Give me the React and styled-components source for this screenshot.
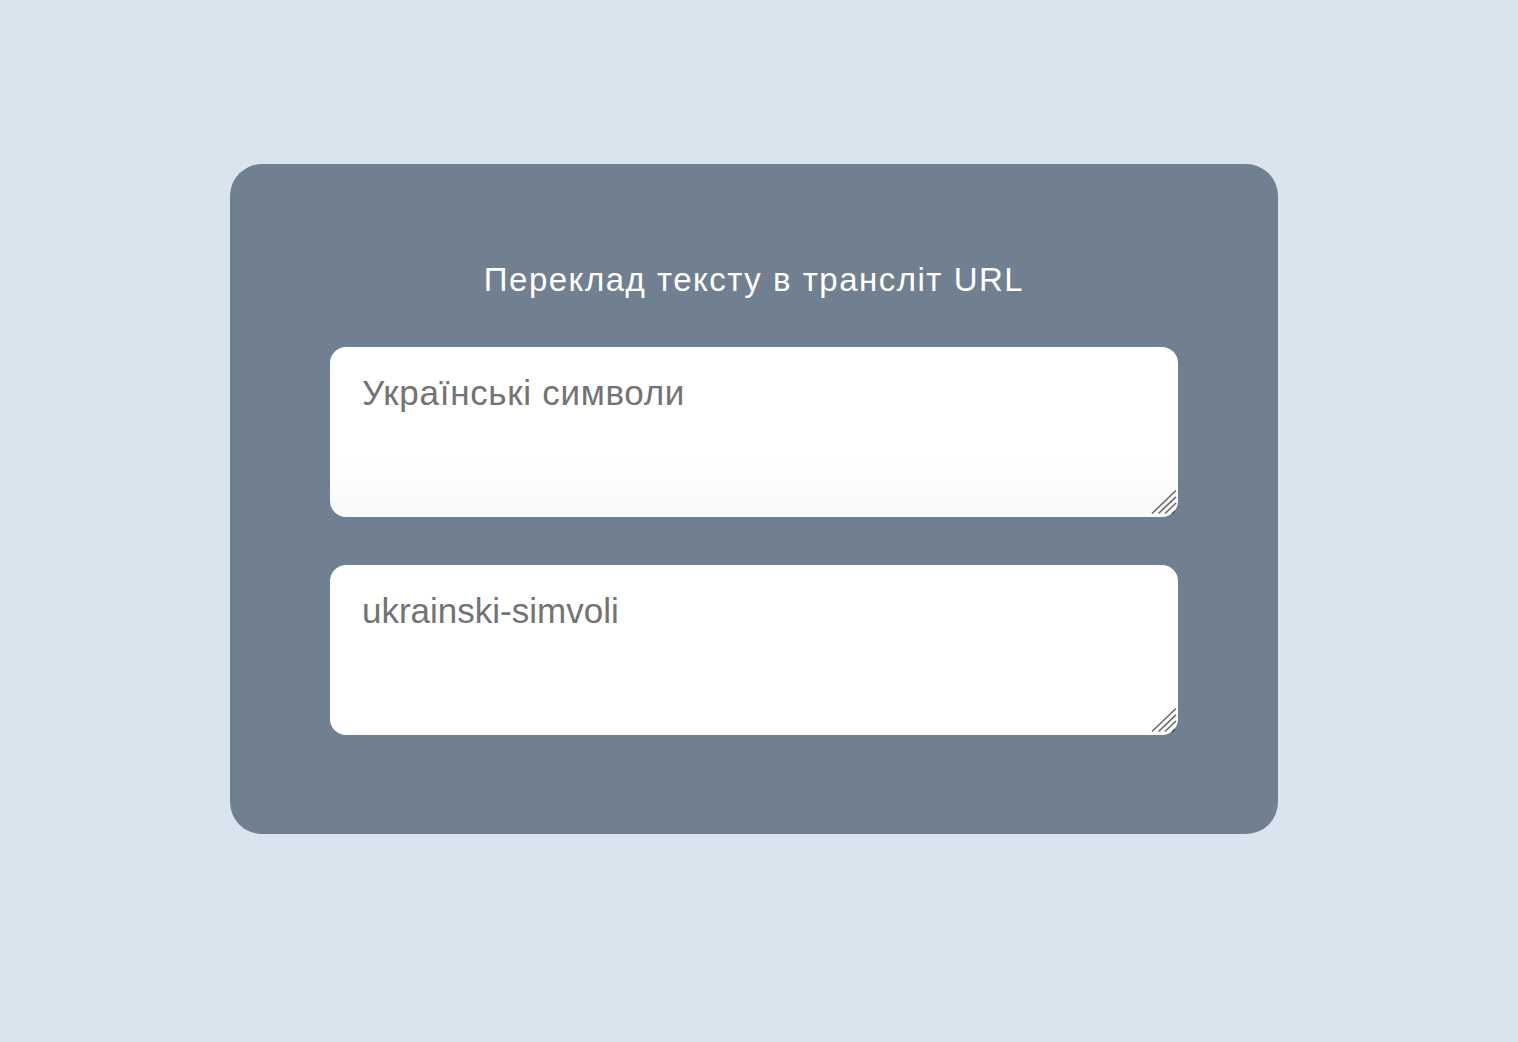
import React, { useState } from 'react'
import styled, { createGlobalStyle } from 'styled-components'

const GlobalStyle = createGlobalStyle`
    html, body {
        margin: 0;
        background: #d9e4ee;
        font-family: "Liberation Sans", Arial, sans-serif;
    }
`

const Page = styled.div`
    min-height: 1042px;
    box-sizing: border-box;
    padding: 164px 240px 0 230px;
`

const Card = styled.div`
    width: 1048px;
    height: 670px;
    box-sizing: border-box;
    padding: 97px 100px 100px;
    background: #718090;
    border-radius: 32px;
    box-shadow: 0 0 40px rgba(255, 255, 255, 0.08);
    display: flex;
    flex-direction: column;
`

const Title = styled.h1`
    margin: 0 0 48px;
    text-align: center;
    color: #ffffff;
    font-size: 33px;
    font-weight: 400;
    line-height: 38px;
    letter-spacing: 1.5px;
`

const Fields = styled.div`
    display: flex;
    flex-direction: column;
    gap: 48px;
`

const FieldWrap = styled.div`
    position: relative;
    height: 170px;
`

const Field = styled.textarea`
    display: block;
    width: 100%;
    height: 100%;
    box-sizing: border-box;
    padding: 26px 32px;
    border: none;
    border-radius: 16px;
    outline: none;
    background: ${(p) => (p.$shaded ? 'linear-gradient(#ffffff 65%, #f8f9f9)' : '#ffffff')};
    color: #737373;
    font-family: "Liberation Sans", Arial, sans-serif;
    font-size: 35px;
    line-height: 40px;
    resize: none;
    &::placeholder {
        color: #737373;
        letter-spacing: 0.7px;
    }
`

const Grip = styled.svg`
    position: absolute;
    right: 0;
    bottom: 0;
    width: 28px;
    height: 28px;
    pointer-events: none;
`

const ResizeGrip = () => (
    <Grip viewBox="0 0 28 28">
        <g stroke="#6b6b6b" strokeWidth="1.6" strokeLinecap="butt">
            <line x1="2" y1="24.5" x2="26" y2="1.5" />
            <line x1="8.5" y1="24.5" x2="26" y2="7.8" />
            <line x1="15" y1="24.5" x2="26" y2="14" />
        </g>
        <line x1="22" y1="25" x2="25" y2="22" stroke="#3e4a58" strokeWidth="1.6" />
    </Grip>
)

const toUrl = (s) => {
    const map = {
        а: 'a', б: 'b', в: 'v', г: 'h', ґ: 'g', д: 'd', е: 'e', є: 'ie', ж: 'zh', з: 'z',
        и: 'y', і: 'i', ї: 'i', й: 'i', к: 'k', л: 'l', м: 'm', н: 'n', о: 'o', п: 'p',
        р: 'r', с: 's', т: 't', у: 'u', ф: 'f', х: 'kh', ц: 'ts', ч: 'ch', ш: 'sh',
        щ: 'shch', ь: '', ю: 'iu', я: 'ia',
    }
    return s
        .toLowerCase()
        .split('')
        .map((c) => (map[c] !== undefined ? map[c] : c))
        .join('')
        .replace(/[^a-z0-9]+/g, '-')
        .replace(/^-|-$/g, '')
}

const App = () => {
    const [text, setText] = useState('')

    return (
        <>
            <GlobalStyle />
            <Page>
                <Card>
                    <Title>Переклад тексту в трансліт URL</Title>
                    <Fields>
                        <FieldWrap>
                            <Field
                                $shaded
                                placeholder="Українські символи"
                                value={text}
                                onChange={(e) => setText(e.target.value)}
                            />
                            <ResizeGrip />
                        </FieldWrap>
                        <FieldWrap>
                            <Field readOnly value={text ? toUrl(text) : 'ukrainski-simvoli'} />
                            <ResizeGrip />
                        </FieldWrap>
                    </Fields>
                </Card>
            </Page>
        </>
    )
}

export default App
